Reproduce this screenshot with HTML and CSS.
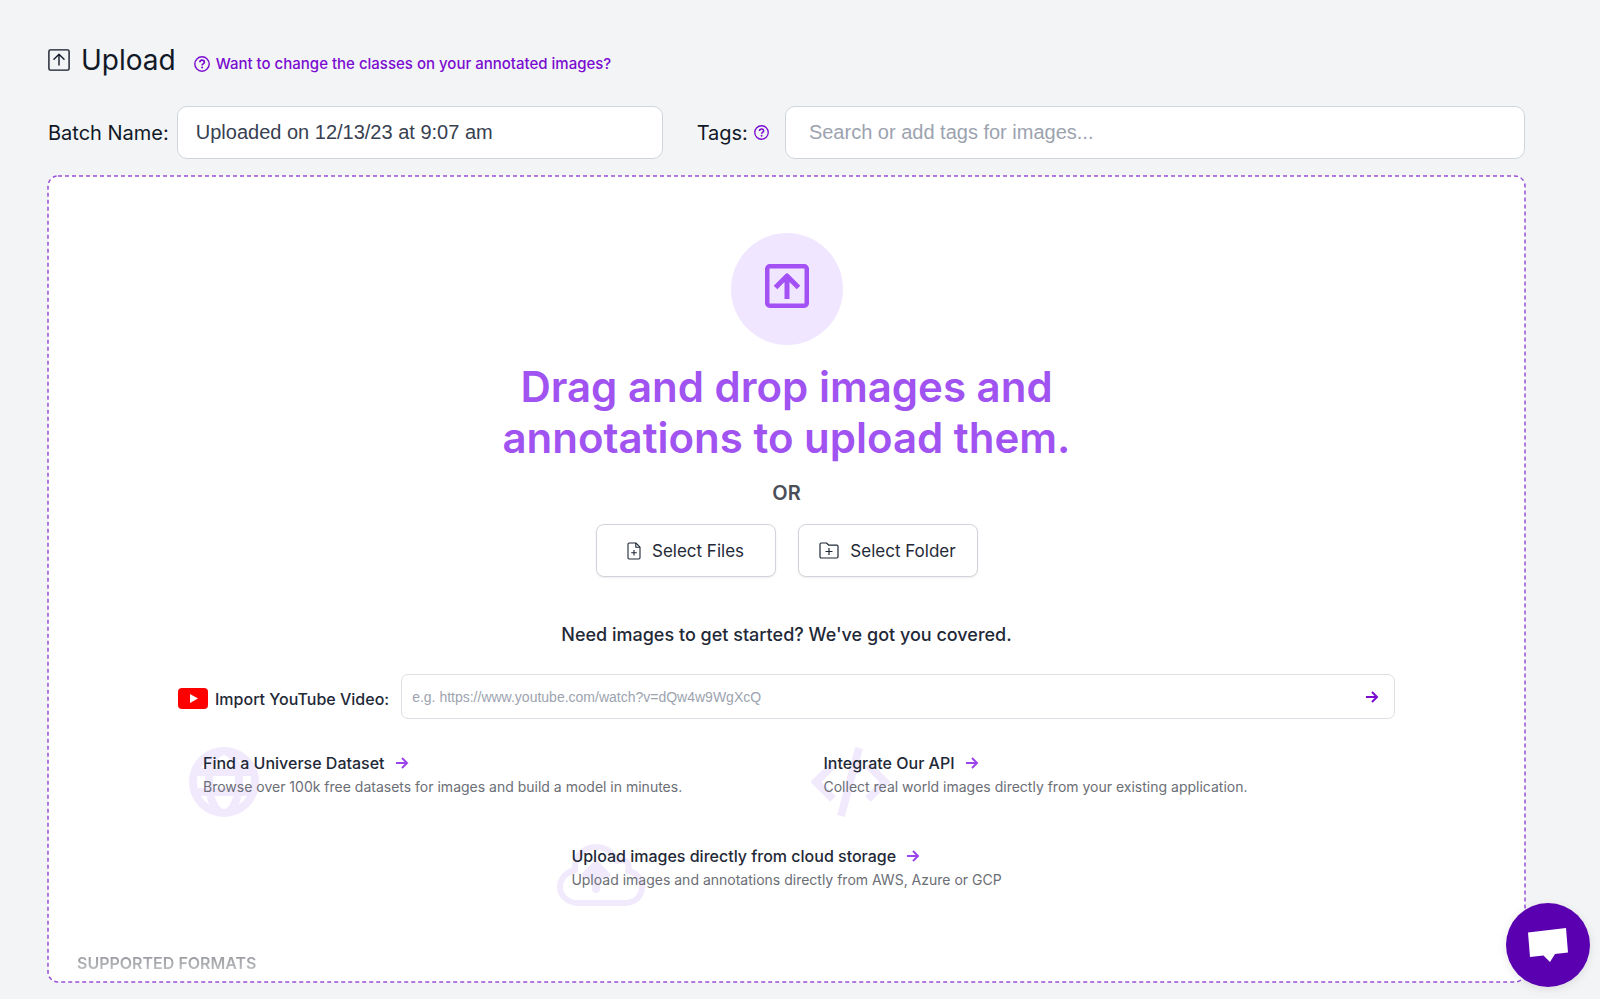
FILE: index.html
```
<!DOCTYPE html>
<html lang="en">
<head>
  <meta charset="utf-8">
  <title>Upload</title>
  <link rel="stylesheet" href="styles.css">
</head>
<body>
  <main class="page">
    <header class="header">
      <svg class="header-icon" viewBox="0 0 24 24" fill="none" stroke="currentColor" stroke-width="1.5" stroke-linecap="round" stroke-linejoin="round">
        <rect x="1" y="1" width="22" height="22" rx="1.5"/>
        <path d="M12 17.5V6M6.5 11.2L12 5.8l5.500 5.400"/>
      </svg>
      <h1>Upload</h1>
      <a class="help-link" href="#">
        <svg class="help-icon" viewBox="0 0 16 16" fill="none" stroke="currentColor" stroke-width="1.400">
          <circle cx="8" cy="8" r="7.200"/>
          <path d="M5.900 6.300c0-1.300 1-2.100 2.200-2.100s2.200.8 2.200 2c0 1.700-2.200 1.600-2.200 3.200" stroke-width="1.700"/>
          <circle cx="8.100" cy="11.400" r="1" fill="currentColor" stroke="none"/>
        </svg>
        Want to change the classes on your annotated images?
      </a>
    </header>

    <form class="fields">
      <label for="batch">Batch Name:</label>
      <input class="field batch" type="text" id="batch" value="Uploaded on 12/13/23 at 9:07 am">
      <label class="tags-label" for="tags">Tags:
        <svg class="tags-icon" viewBox="0 0 16 16" fill="none" stroke="currentColor" stroke-width="1.400">
          <circle cx="8" cy="8" r="7.200"/>
          <path d="M5.900 6.300c0-1.300 1-2.100 2.200-2.100s2.200.8 2.200 2c0 1.700-2.200 1.600-2.200 3.200" stroke-width="1.700"/>
          <circle cx="8.100" cy="11.400" r="1" fill="currentColor" stroke="none"/>
        </svg>
      </label>
      <input class="field tags" type="text" id="tags" placeholder="Search or add tags for images...">
    </form>

    <section class="dropzone">
      <svg class="outline"><rect width="100%" height="100%" rx="10"/></svg>
      <div class="circle">
        <svg viewBox="0 0 44 44" fill="none" stroke="currentColor" stroke-width="4.500">
          <rect x="2.250" y="2.250" width="39.500" height="39.500" rx="2.500"/>
          <path d="M22 35V12M10.500 23.500L22 12l11.500 11.500" stroke-width="5" stroke-linejoin="round"/>
        </svg>
      </div>
      <h2>Drag and drop images and<br>annotations to upload them.</h2>
      <p class="or">OR</p>
      <div class="buttons">
        <button class="btn" type="button">
          <svg class="file-icon" viewBox="0 0 14 18" fill="none" stroke="currentColor" stroke-width="1.100" stroke-linejoin="round">
            <path d="M2.200 1h6.600L13 5.200v10.600c0 .7-.5 1.200-1.200 1.200H2.200C1.500 17 1 16.500 1 15.800V2.200C1 1.500 1.500 1 2.200 1z"/>
            <path d="M8.800 1v4.200H13M7 8v5.600M4.200 10.800h5.600"/>
          </svg>
          Select Files
        </button>
        <button class="btn" type="button">
          <svg class="folder-icon" viewBox="0 0 20 18" fill="none" stroke="currentColor" stroke-width="1.200" stroke-linejoin="round">
            <path d="M2.200 1h5.300l2.300 2.200h8c.7 0 1.200.5 1.200 1.200v10.400c0 .7-.5 1.200-1.200 1.200H2.200C1.500 16 1 15.500 1 14.800V2.200C1 1.500 1.500 1 2.200 1z"/>
            <path d="M10 6v7M6.500 9.500h7"/>
          </svg>
          Select Folder
        </button>
      </div>

      <p class="need">Need images to get started? We've got you covered.</p>

      <div class="sources">
        <form class="youtube">
          <label for="video">
            <svg class="youtube-icon" viewBox="0 0 30 21">
              <rect width="30" height="21" rx="4" fill="#f00"/>
              <path d="M12 6v9l8-4.500z" fill="#fff"/>
            </svg>
            Import YouTube Video:
          </label>
          <div class="video-box">
            <input type="text" id="video" placeholder="e.g. https://www.youtube.com/watch?v=dQw4w9WgXcQ">
            <button type="button" aria-label="Import">
              <svg class="arrow" viewBox="0 0 14 14"><path d="M1 7h11M7 2l5 5-5 5"/></svg>
            </button>
          </div>
        </form>

        <div class="links">
          <a class="source" href="#">
            <svg class="bg-icon globe" viewBox="0 0 70 70" fill="none" stroke="currentColor" stroke-width="8">
              <circle cx="35" cy="35" r="31"/>
              <ellipse cx="35" cy="35" rx="15" ry="31"/>
              <path d="M6 25h58M6 45h58"/>
            </svg>
            <span class="source-title">Find a Universe Dataset
              <svg class="arrow" viewBox="0 0 14 14"><path d="M1 7h11M7 2l5 5-5 5"/></svg>
            </span>
            <span class="source-text">Browse over 100k free datasets for images and build a model in minutes.</span>
          </a>
          <a class="source" href="#">
            <svg class="bg-icon code" viewBox="0 0 80 70" fill="none" stroke="currentColor" stroke-width="8">
              <path d="M48 1L30 69M22 18L5 35l17 17M57 18l17 17-17 17"/>
            </svg>
            <span class="source-title">Integrate Our API
              <svg class="arrow" viewBox="0 0 14 14"><path d="M1 7h11M7 2l5 5-5 5"/></svg>
            </span>
            <span class="source-text">Collect real world images directly from your existing application.</span>
          </a>
        </div>

        <a class="source cloud-source" href="#">
          <svg class="bg-icon cloud" viewBox="0 0 88 62" fill="none" stroke="currentColor" stroke-width="6" stroke-linejoin="round">
            <path d="M21 59h47c10 0 17-7 17-16 0-8-6-15-14-16 2-5 0-10-5-11-2 0-4 0-6 1C56 8 48 3 39 3 26 3 17 13 18 26 9 28 3 35 3 43c0 9 8 16 18 16z"/>
            <path d="M39 45V24M29 31l10-10 10 10z" stroke-width="8" stroke-linecap="round"/>
          </svg>
          <span class="source-title">Upload images directly from cloud storage
            <svg class="arrow" viewBox="0 0 14 14"><path d="M1 7h11M7 2l5 5-5 5"/></svg>
          </span>
          <span class="source-text">Upload images and annotations directly from AWS, Azure or GCP</span>
        </a>
      </div>

      <h3 class="formats">SUPPORTED FORMATS</h3>
    </section>
  </main>

  <button class="chat" type="button" aria-label="Open chat">
    <svg viewBox="0 0 40 34"><path d="M0 4.500L38 0l2 24.500-13 1.500-5 8-6.500-6.500L2 29z" fill="#fff"/></svg>
  </button>
</body>
</html>
```
FILE: styles.css
```
* {
  box-sizing: border-box;
}
body {
  margin: 0;
  background: #f3f4f6;
  color: #111827;
  font-family: Inter, sans-serif;
}
h1, h2, h3, p {
  margin: 0;
}
a {
  text-decoration: none;
}
button {
  font-family: inherit;
  cursor: pointer;
}
.page {
  display: flex;
  flex-direction: column;
  min-height: 100vh;
  padding: 40px 75px 17px 48px;
}

/* header */
.header {
  display: flex;
  align-items: center;
  height: 40px;
}
.header-icon {
  width: 22px;
  height: 22px;
  margin-right: 11px;
}
h1 {
  font-size: 28px;
  font-weight: 400;
  line-height: 40px;
}
.help-link {
  display: flex;
  align-items: center;
  gap: 6px;
  margin: 7px 0 0 18px;
  color: #7a0bd0;
  font-size: 15px;
  font-weight: 500;
}
.help-icon {
  width: 16px;
  height: 16px;
}

/* batch name and tags */
.fields {
  display: flex;
  align-items: center;
  margin: 26px 0 17px;
  font-size: 20px;
}
.field {
  height: 53px;
  border: 1px solid #d1d5db;
  border-radius: 10px;
  background: #fff;
  color: #374151;
  font-family: "Liberation Sans", Arial, sans-serif;
  font-size: 20px;
}
.batch {
  flex: 11 1 0;
  min-width: 0;
  margin: 0 34px 0 8px;
  padding: 0 18px;
}
.tags-label {
  display: flex;
  align-items: center;
  gap: 6px;
}
.tags-icon {
  width: 15px;
  height: 15px;
  color: #7a0bd0;
}
.tags {
  flex: 17 1 0;
  min-width: 0;
  margin-left: 16px;
  padding: 0 23px;
}
input::placeholder {
  color: #9ca3af;
  opacity: 1;
}

/* drop area */
.dropzone {
  position: relative;
  display: flex;
  flex-direction: column;
  align-items: center;
  flex: 1;
  padding: 57px 29px 9px;
  border-radius: 10px;
  background: #fff;
}
.outline {
  position: absolute;
  top: 0;
  left: 0;
  width: 100%;
  height: 100%;
  overflow: visible;
  fill: none;
  stroke: #9a4fd8;
  stroke-width: 1.5;
  stroke-dasharray: 4 3;
  pointer-events: none;
}
.circle {
  display: flex;
  align-items: center;
  justify-content: center;
  width: 112px;
  height: 112px;
  padding-bottom: 6px;
  border-radius: 50%;
  background: #f0e6ff;
  color: #a351f4;
}
.circle svg {
  width: 44px;
  height: 44px;
}
h2 {
  margin-top: 16px;
  color: #a053f0;
  font-size: 42px;
  font-weight: 600;
  line-height: 51px;
  text-align: center;
}
.or {
  margin-top: 16px;
  color: #4b5058;
  font-size: 20px;
  font-weight: 600;
  line-height: 28px;
}
.buttons {
  display: flex;
  gap: 22px;
  margin-top: 17px;
}
.btn {
  display: flex;
  align-items: center;
  justify-content: center;
  gap: 11px;
  width: 180px;
  height: 53px;
  border: 1px solid #d1d5db;
  border-radius: 8px;
  background: #fff;
  box-shadow: 0 1px 2px rgba(0, 0, 0, 0.08);
  color: #1f2937;
  font-size: 17px;
}
.file-icon {
  width: 14px;
  height: 18px;
}
.folder-icon {
  width: 20px;
  height: 18px;
}
.need {
  margin-top: 44px;
  color: #1f2937;
  font-size: 18px;
  font-weight: 500;
  line-height: 28px;
}

/* other sources */
.sources {
  display: flex;
  flex-direction: column;
  width: 100%;
  max-width: 1217px;
  margin-top: 25px;
}
.youtube {
  display: flex;
  align-items: center;
  gap: 12px;
}
.youtube label {
  display: flex;
  align-items: center;
  gap: 7px;
  padding-top: 4px;
  color: #1f2937;
  font-size: 16px;
  font-weight: 500;
}
.youtube-icon {
  width: 30px;
  height: 21px;
}
.video-box {
  display: flex;
  flex: 1;
  height: 45px;
  border: 1px solid #dcdfe3;
  border-radius: 7px;
}
.video-box input {
  flex: 1;
  min-width: 0;
  padding: 0 10px;
  border: 0;
  background: none;
  font-family: "Liberation Sans", Arial, sans-serif;
  font-size: 14px;
}
.video-box button {
  display: flex;
  align-items: center;
  padding: 0 15px;
  border: 0;
  background: none;
  color: #7a0bd0;
}
.arrow {
  width: 14px;
  height: 14px;
  fill: none;
  stroke: currentColor;
  stroke-width: 2;
}
.links {
  display: grid;
  grid-template-columns: 1fr 1fr;
  gap: 24px;
  margin-top: 32px;
  padding-left: 25px;
  margin-right: -25px;
}
.source {
  position: relative;
  display: flex;
  flex-direction: column;
}
.source-title {
  display: flex;
  align-items: center;
  gap: 10px;
  z-index: 1;
  color: #1f2937;
  font-size: 16px;
  font-weight: 500;
  line-height: 24px;
}
.source-title .arrow {
  color: #9b45ec;
}
.source-text {
  z-index: 1;
  color: #6b6e75;
  font-size: 14px;
  line-height: 24px;
}
.cloud-source {
  align-self: center;
  margin-top: 45px;
}
/* faint drawings behind the link texts */
.bg-icon {
  position: absolute;
  color: #f1eafd;
}
.globe {
  top: -4px;
  left: -14px;
  width: 70px;
  height: 70px;
}
.code {
  top: -4px;
  left: -13px;
  width: 80px;
  height: 70px;
}
.cloud {
  top: 0;
  left: -14px;
  width: 88px;
  height: 62px;
}
.formats {
  align-self: flex-start;
  margin-top: auto;
  background: linear-gradient(#8f9296, #c4c6c9);
  background-clip: text;
  color: transparent;
  font-size: 16px;
  font-weight: 600;
  line-height: 20px;
}

.chat {
  position: fixed;
  right: 10px;
  bottom: 12px;
  display: flex;
  align-items: center;
  justify-content: center;
  width: 84px;
  height: 84px;
  border: 0;
  border-radius: 50%;
  background: #5a00b0;
  box-shadow: 0 2px 10px rgba(0, 0, 0, 0.1);
}
.chat svg {
  width: 40px;
  height: 34px;
}
```
